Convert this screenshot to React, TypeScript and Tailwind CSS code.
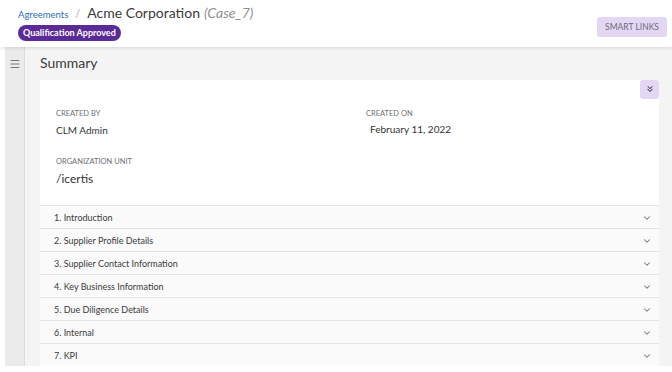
import { ChevronDown, ChevronsDown, Menu } from "lucide-react";

const sections = [
  "1. Introduction",
  "2. Supplier Profile Details",
  "3. Supplier Contact Information",
  "4. Key Business Information",
  "5. Due Diligence Details",
  "6. Internal",
  "7. KPI",
];

export default function App() {
  return (
    <div className="w-[672px] h-[372px] bg-white overflow-hidden" style={{ fontFamily: "Lato, 'Noto Sans', sans-serif" }}>
      {/* header */}
      <div className="relative z-10 h-[47px] flex justify-between items-start px-[18px] shadow-[0_1px_3px_rgba(0,0,0,0.12)]">
        <div className="flex flex-col pt-[2px]">
          <div className="flex items-baseline">
            <span className="text-[9.5px] text-[#2f6fb8]">Agreements</span>
            <span className="text-[11px] text-[#aaa] mx-[7px]">/</span>
            <span className="text-[14px] text-[#3a3a3a]">Acme Corporation</span>
            <span className="text-[14px] italic text-[#8f8f8f] ml-[4px]">(Case_7)</span>
          </div>
          <span className="mt-[2px] self-start rounded-full bg-[#5a2b97] text-white text-[9px] font-bold px-[5px] h-[16px] leading-[16px]">
            Qualification Approved
          </span>
        </div>
        <button className="mt-[17px] mr-[-13px] h-[20px] w-[70px] rounded-[3px] bg-[#e3d7f4] text-[8.5px] text-[#6e6a7a] uppercase">
          Smart Links
        </button>
      </div>

      {/* body */}
      <div className="flex h-[319px] pl-[5px]">
        <div className="w-[20px] bg-[#ebebeb] border-r border-[#dcdcdc] flex justify-center pt-[11px]">
          <Menu size={12} className="text-[#777]" strokeWidth={2} />
        </div>
        <div className="flex-1 bg-[#f4f4f4] pl-[15px] pr-[13px] flex flex-col">
          <div className="h-[33px] flex items-center text-[14px] text-[#3a3a3a] pb-[1px]">Summary</div>
          <div className="bg-white relative h-[127px] px-[16px] pt-[29px]">
            <button className="absolute top-0 right-0 w-[19px] h-[19px] rounded-[3px] bg-[#e3d7f4] flex items-center justify-center">
              <ChevronsDown size={10} strokeWidth={2.5} className="text-[#555]" />
            </button>
            <div className="grid grid-cols-[310px_1fr]">
              <div className="flex flex-col">
                <span className="text-[7.5px] uppercase text-[#6f6f6f] leading-[10px]">Created By</span>
                <span className="text-[10px] mt-[4px] text-[#333] leading-[14px]">CLM Admin</span>
              </div>
              <div className="flex flex-col">
                <span className="text-[7.5px] uppercase text-[#6f6f6f] leading-[10px]">Created On</span>
                <span className="text-[10px] mt-[3px] ml-[4px] text-[#333] leading-[14px]">February 11, 2022</span>
              </div>
            </div>
            <div className="mt-[20px] flex flex-col">
              <span className="text-[7.5px] uppercase text-[#6f6f6f] leading-[10px]">Organization Unit</span>
              <span className="text-[12px] mt-[5px] text-[#333] leading-[14px]">/icertis</span>
            </div>
          </div>
          <div className="flex flex-col">
            {sections.map((s) => (
              <div
                key={s}
                className="h-[23px] bg-[#fafafa] border-t border-[#e4e4e4] flex items-center justify-between pl-[14px] pr-[7px] pt-[1px]"
              >
                <span className="text-[9px] text-[#3a3a3a]">{s}</span>
                <ChevronDown size={10} strokeWidth={2.5} className="text-[#777]" />
              </div>
            ))}
          </div>
        </div>
      </div>
    </div>
  );
}
